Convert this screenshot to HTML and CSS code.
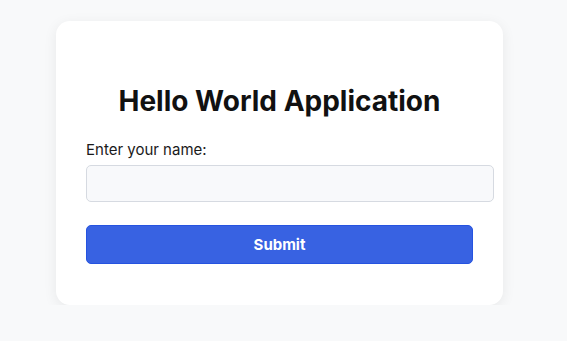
FILE: index.html
```html
<!DOCTYPE html>
<html>
<head>
    <title>Hello World Application</title>
    <link rel="stylesheet" href="styles.css">
</head>
<body>
    <div class="container">
        <h1>Hello World Application</h1>

        <form id="nameForm">
            <label for="name">Enter your name:</label>
            <input type="text" id="name" name="name">
            <button type="submit">Submit</button>
        </form>
    </div>
</body>
</html>
```

FILE: styles.css
```css
body {
    font-family: Inter, "Noto Sans", sans-serif;
    background-color: #f8f9fa;
    margin: 0;
    padding: 21px 0 0 56px;
}
.container {
    width: 387px;
    padding: 30px;
    background-color: white;
    border-radius: 14px;
    box-shadow: 0 3px 14px rgba(0, 0, 0, 0.07);
}
h1 {
    text-align: center;
    font-size: 28px;
    font-weight: 700;
    color: #111;
    margin: 33px 0 22px;
}
#nameForm {
    margin-bottom: 11px;
}
label {
    display: block;
    margin-bottom: 6px;
    font-size: 15px;
    color: #1a1a1a;
}
input[type="text"] {
    display: block;
    width: 100%;
    height: 15px;
    padding: 10px 9.5px;
    margin-bottom: 23px;
    border: 1px solid #d6dae1;
    border-radius: 5px;
    background-color: #f8f9fb;
}
button {
    display: block;
    width: 100%;
    height: 39px;
    background-color: #3862e2;
    color: white;
    font-family: inherit;
    font-size: 15px;
    font-weight: 700;
    border: 1px solid #2553e0;
    border-radius: 5px;
    cursor: pointer;
}
button:hover {
    background-color: #2d55d4;
}
```
